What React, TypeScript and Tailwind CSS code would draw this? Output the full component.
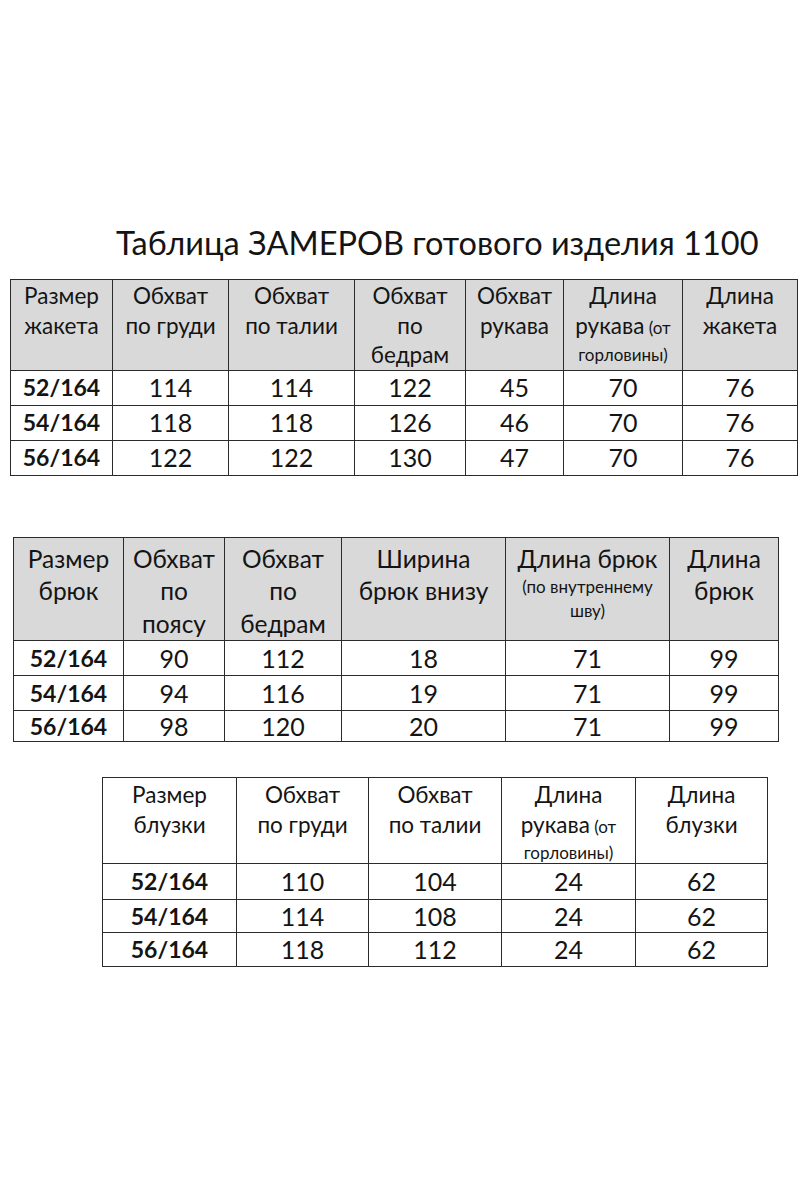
import React from "react";

type Line = { text: string; small?: string };

const L = (text: string, small?: string): Line => ({ text, small });

type SizeTableProps = {
  wrap: string;
  cols: string[];
  head: Line[][];
  rows: string[][];
  headRow: string;
  headCell: string;
  bodyRows: string[];
  mainLine: string;
  smallLine: string;
};

const HeadLines = ({ lines, mainLine, smallLine }: { lines: Line[]; mainLine: string; smallLine: string }) => (
  <>
    {lines.map((l, i) =>
      l.text === "" && l.small ? (
        <div key={i} className={smallLine}>
          {l.small}
        </div>
      ) : (
        <div key={i} className={mainLine}>
          {l.text}
          {l.small && <span className="text-[17px]"> {l.small}</span>}
        </div>
      )
    )}
  </>
);

const SizeTable = ({ wrap, cols, head, rows, headRow, headCell, bodyRows, mainLine, smallLine }: SizeTableProps) => (
  <table className={`${wrap} table-fixed border-collapse text-[#141414]`}>
    <colgroup>
      {cols.map((c, i) => (
        <col key={i} className={c} />
      ))}
    </colgroup>
    <thead>
      <tr className={headRow}>
        {head.map((lines, i) => (
          <th key={i} className={`border-[1.5px] border-[#2b2b2b] align-top font-normal ${headCell}`}>
            <HeadLines lines={lines} mainLine={mainLine} smallLine={smallLine} />
          </th>
        ))}
      </tr>
    </thead>
    <tbody>
      {rows.map((r, ri) => (
        <tr key={ri} className={bodyRows[ri]}>
          {r.map((v, ci) => (
            <td
              key={ci}
              className={`border-[1.5px] border-[#2b2b2b] p-0 text-center align-middle leading-none ${
                ci === 0 ? "text-[23px] font-bold" : "text-[25px]"
              }`}
            >
              {v}
            </td>
          ))}
        </tr>
      ))}
    </tbody>
  </table>
);

export default function App() {
  return (
    <div className="min-h-[1200px] w-[800px] bg-white pt-[223px] font-[Lato,'Liberation_Sans',sans-serif] text-[#141414]">
      <h1 className="ml-[116px] text-[32.5px] leading-[40px] font-normal">
        Таблица ЗАМЕРОВ готового изделия 1100
      </h1>

      <SizeTable
        wrap="mt-[16px] ml-[10px] w-[787px]"
        cols={["w-[102px]", "w-[116px]", "w-[126px]", "w-[111px]", "w-[98px]", "w-[119px]", "w-[115px]"]}
        head={[
          [L("Размер"), L("жакета")],
          [L("Обхват"), L("по груди")],
          [L("Обхват"), L("по талии")],
          [L("Обхват"), L("по"), L("бедрам")],
          [L("Обхват"), L("рукава")],
          [L("Длина"), L("рукава", "(от"), L("", "горловины)")],
          [L("Длина"), L("жакета")],
        ]}
        rows={[
          ["52/164", "114", "114", "122", "45", "70", "76"],
          ["54/164", "118", "118", "126", "46", "70", "76"],
          ["56/164", "122", "122", "130", "47", "70", "76"],
        ]}
        headRow="h-[89px] bg-[#d9d9d9]"
        headCell="px-0 pt-[1px]"
        bodyRows={["h-[35px]", "h-[35px]", "h-[35px]"]}
        mainLine="text-[22.5px] leading-[29.5px]"
        smallLine="text-[17px] leading-[25px]"
      />

      <SizeTable
        wrap="mt-[61px] ml-[13px] w-[765px]"
        cols={["w-[110px]", "w-[101px]", "w-[117px]", "w-[164px]", "w-[164px]", "w-[109px]"]}
        head={[
          [L("Размер"), L("брюк")],
          [L("Обхват"), L("по"), L("поясу")],
          [L("Обхват"), L("по"), L("бедрам")],
          [L("Ширина"), L("брюк внизу")],
          [L("Длина брюк"), L("", "(по внутреннему"), L("", "шву)")],
          [L("Длина"), L("брюк")],
        ]}
        rows={[
          ["52/164", "90", "112", "18", "71", "99"],
          ["54/164", "94", "116", "19", "71", "99"],
          ["56/164", "98", "120", "20", "71", "99"],
        ]}
        headRow="h-[102px] bg-[#d9d9d9]"
        headCell="px-0 pt-[5px]"
        bodyRows={["h-[35px]", "h-[35px]", "h-[31px]"]}
        mainLine="text-[24.5px] leading-[32.5px]"
        smallLine="text-[17px] leading-[24px]"
      />

      <SizeTable
        wrap="mt-[35px] ml-[102px] w-[665px]"
        cols={["w-[134px]", "w-[132px]", "w-[133px]", "w-[134px]", "w-[132px]"]}
        head={[
          [L("Размер"), L("блузки")],
          [L("Обхват"), L("по груди")],
          [L("Обхват"), L("по талии")],
          [L("Длина"), L("рукава", "(от"), L("", "горловины)")],
          [L("Длина"), L("блузки")],
        ]}
        rows={[
          ["52/164", "110", "104", "24", "62"],
          ["54/164", "114", "108", "24", "62"],
          ["56/164", "118", "112", "24", "62"],
        ]}
        headRow="h-[83px] bg-white"
        headCell="px-0 pt-[2px]"
        bodyRows={["h-[36px]", "h-[33px]", "h-[34px]"]}
        mainLine="text-[22.5px] leading-[30px]"
        smallLine="text-[17px] leading-[21px]"
      />
    </div>
  );
}
